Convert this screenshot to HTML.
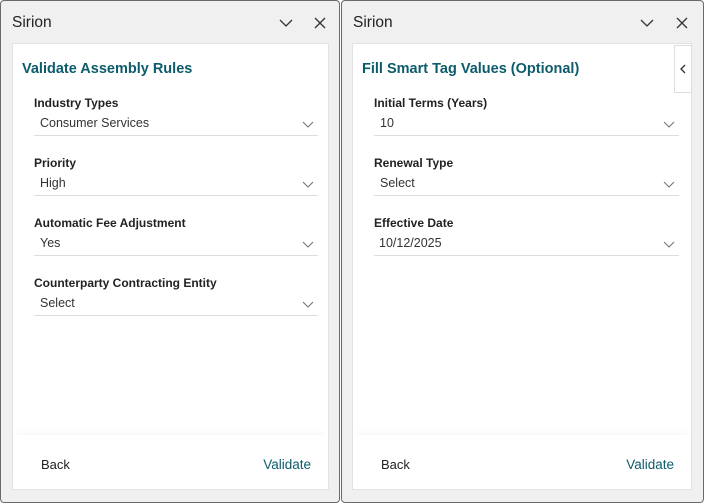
<!DOCTYPE html>
<html><head><style>
*{margin:0;padding:0;box-sizing:border-box}
body{width:704px;height:504px;background:#fff;font-family:"Liberation Sans",sans-serif;position:relative;overflow:hidden}
.p{position:absolute;top:0;height:503px;background:#f0f0f0;border:1px solid #6a6a6a;border-radius:4px}
.t{position:absolute;left:11px;top:13px;font-size:15.5px;color:#222}
.card{position:absolute;top:42px;bottom:12px;background:#fff;border:1px solid #e2e2e2}
.foot{position:absolute;left:0;right:0;bottom:0;height:54px;background:#fff;box-shadow:0 -6px 8px -4px rgba(0,0,0,.04)}
.h{position:absolute;left:9px;top:17px;font-size:14.5px;font-weight:bold;color:#0d5c6b}
.lab{position:absolute;left:21px;font-size:12px;font-weight:bold;color:#222}
.val{position:absolute;left:21px;height:24px;border-bottom:1px solid #ddd;font-size:12.5px;color:#333;padding-left:6px;padding-top:4px}
.val svg{position:absolute;right:4px;top:9px}
.back{position:absolute;left:28px;bottom:17px;font-size:13px;color:#222}
.vd{position:absolute;right:17px;bottom:17px;font-size:13.5px;color:#0d5c6b}
.ic{position:absolute;top:14px}
</style></head><body>
<div class="p" style="left:0;width:340px">
<div class="t">Sirion</div>
<svg class="ic" style="left:277px" width="16" height="16"><path d="M2 5l6 6 6-6" fill="none" stroke="#333" stroke-width="1.3"/></svg>
<svg class="ic" style="left:311px" width="16" height="16"><path d="M3 3l10 10M13 3L3 13" fill="none" stroke="#333" stroke-width="1.3"/></svg>
<div class="card" style="left:11px;right:10px">
<div class="h">Validate Assembly Rules</div>
<div class="lab" style="top:52px">Industry Types</div>
<div class="val" style="top:68px;width:284px">Consumer Services<svg width="12" height="8"><path d="M1 1l5 5 5-5" fill="none" stroke="#777" stroke-width="1.1"/></svg></div>
<div class="lab" style="top:112px">Priority</div>
<div class="val" style="top:128px;width:284px">High<svg width="12" height="8"><path d="M1 1l5 5 5-5" fill="none" stroke="#777" stroke-width="1.1"/></svg></div>
<div class="lab" style="top:172px">Automatic Fee Adjustment</div>
<div class="val" style="top:188px;width:284px">Yes<svg width="12" height="8"><path d="M1 1l5 5 5-5" fill="none" stroke="#777" stroke-width="1.1"/></svg></div>
<div class="lab" style="top:232px">Counterparty Contracting Entity</div>
<div class="val" style="top:248px;width:284px">Select<svg width="12" height="8"><path d="M1 1l5 5 5-5" fill="none" stroke="#777" stroke-width="1.1"/></svg></div>
<div class="foot"><div class="back">Back</div><div class="vd">Validate</div></div>
</div>
</div>
<div class="p" style="left:341px;width:363px">
<div class="t">Sirion</div>
<svg class="ic" style="left:297px" width="16" height="16"><path d="M2 5l6 6 6-6" fill="none" stroke="#333" stroke-width="1.3"/></svg>
<svg class="ic" style="left:332px" width="16" height="16"><path d="M3 3l10 10M13 3L3 13" fill="none" stroke="#333" stroke-width="1.3"/></svg>
<div class="card" style="left:10px;right:11px">
<div class="h">Fill Smart Tag Values (Optional)</div>
<div style="position:absolute;right:-1px;top:1px;width:18px;height:48px;border:1px solid #ddd;background:#fff"><svg style="position:absolute;left:4px;top:18px" width="8" height="10"><path d="M6 1L2 5l4 4" fill="none" stroke="#333" stroke-width="1.3"/></svg></div>
<div class="lab" style="top:52px">Initial Terms (Years)</div>
<div class="val" style="top:68px;width:305px">10<svg width="12" height="8"><path d="M1 1l5 5 5-5" fill="none" stroke="#777" stroke-width="1.1"/></svg></div>
<div class="lab" style="top:112px">Renewal Type</div>
<div class="val" style="top:128px;width:305px">Select<svg width="12" height="8"><path d="M1 1l5 5 5-5" fill="none" stroke="#777" stroke-width="1.1"/></svg></div>
<div class="lab" style="top:172px">Effective Date</div>
<div class="val" style="top:188px;width:305px;padding-left:5px">10/12/2025<svg width="12" height="8"><path d="M1 1l5 5 5-5" fill="none" stroke="#777" stroke-width="1.1"/></svg></div>
<div class="foot"><div class="back">Back</div><div class="vd">Validate</div></div>
</div>
</div>
</body></html>
